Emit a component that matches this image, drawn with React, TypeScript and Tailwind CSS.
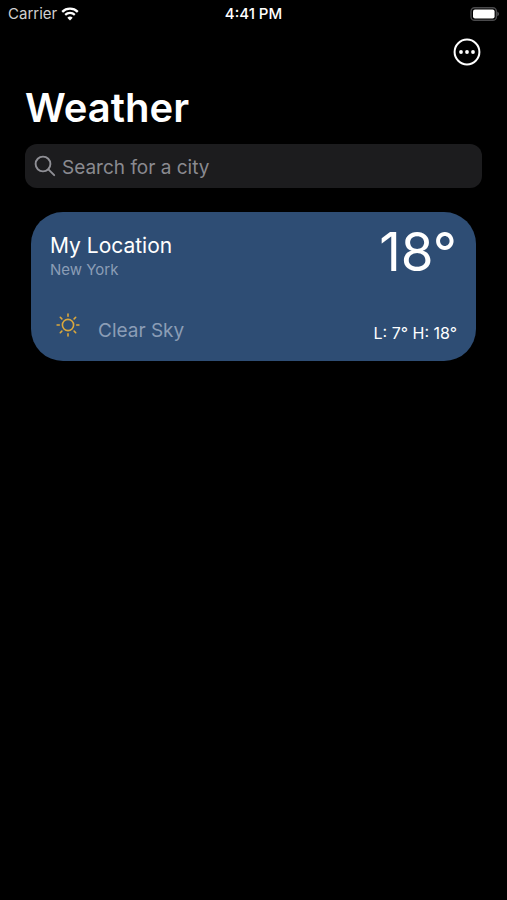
function WifiIcon() {
  return (
    <svg width="18" height="14" viewBox="0 0 18 14" fill="none" aria-hidden="true">
      <path d="M1.2 4.8a11.2 11.2 0 0 1 15.6 0" stroke="white" strokeWidth="2.3" />
      <path d="M4.2 7.9a6.9 6.9 0 0 1 9.6 0" stroke="white" strokeWidth="2.2" />
      <path d="M9 13.4 6.3 10.7a3.9 3.9 0 0 1 5.4 0z" fill="white" />
    </svg>
  );
}

function BatteryIcon() {
  return (
    <svg width="29" height="14" viewBox="0 0 29 14" fill="none" aria-hidden="true">
      <rect x="1" y="0.7" width="25.4" height="12.6" rx="3.6" stroke="#4a4a4c" strokeWidth="1.4" />
      <rect x="3" y="2.4" width="21.6" height="9.2" rx="2" fill="white" />
      <path d="M27.4 4.8c1 .4 1.5 1.2 1.5 2.2s-.5 1.8-1.5 2.2z" fill="#5a5a5c" />
    </svg>
  );
}

function MoreIcon() {
  return (
    <svg width="28" height="28" viewBox="0 0 28 28" fill="none" aria-hidden="true">
      <circle cx="14" cy="14" r="12.4" stroke="white" strokeWidth="2" />
      <circle cx="8" cy="14" r="1.9" fill="white" />
      <circle cx="14" cy="14" r="1.9" fill="white" />
      <circle cx="20" cy="14" r="1.9" fill="white" />
    </svg>
  );
}

function SearchIcon() {
  return (
    <svg width="22" height="22" viewBox="0 0 22 22" fill="none" stroke="#8f8f95" strokeWidth="1.9" strokeLinecap="round" aria-hidden="true">
      <circle cx="9" cy="9" r="7.4" />
      <path d="m14.4 14.4 5.8 5.8" />
    </svg>
  );
}

const rays = [0, 45, 90, 135, 180, 225, 270, 315];

function SunIcon() {
  return (
    <svg width="24" height="24" viewBox="0 0 24 24" fill="none" stroke="#dba83c" strokeWidth="1.6" strokeLinecap="round" aria-hidden="true">
      <circle cx="12" cy="12" r="5.6" />
      {rays.map((angle) => (
        <path key={angle} d="M12 3.3V1.1" transform={`rotate(${angle} 12 12)`} />
      ))}
    </svg>
  );
}

export default function App() {
  return (
    <div className="min-h-screen bg-black font-['Inter',sans-serif] text-white">
      <header className="grid h-7 grid-cols-3 items-center px-2 text-[15px]">
        <div className="flex items-center gap-1 text-[#d0d0d0]">
          <span>Carrier</span>
          <WifiIcon />
        </div>
        <time className="text-center font-medium">4:41 PM</time>
        <div className="flex justify-end">
          <BatteryIcon />
        </div>
      </header>

      <div className="flex h-12 items-center justify-end px-[26px]">
        <button type="button" aria-label="More options">
          <MoreIcon />
        </button>
      </div>

      <main className="px-[25px]">
        <h1 className="pt-1 pb-2 text-[40px] leading-14 font-semibold">Weather</h1>

        <label className="flex h-11 items-center gap-1.5 rounded-xl bg-[#1c1c1e] px-[9px]">
          <SearchIcon />
          <input
            type="search"
            aria-label="Search for a city"
            placeholder="Search for a city"
            className="h-8 min-w-0 flex-1 bg-transparent pt-0.5 text-[19px] outline-none placeholder:text-[#8a8a90]"
          />
        </label>

        <article className="mx-1.5 mt-6 flex h-[149px] flex-col justify-between rounded-[32px] bg-[#2e4d74] px-[19px] pt-4 pb-4">
          <div className="flex items-start justify-between">
            <div className="pt-1">
              <h2 className="text-[21px] leading-7">My Location</h2>
              <p className="text-[15px] leading-5">
                <span className="text-[#8b9db6]">New York</span>
              </p>
            </div>
            <p className="text-[53px] leading-12">18°</p>
          </div>
          <div className="flex items-end justify-between">
            <div className="flex items-end gap-[18px] pl-1.5">
              <div className="pb-2">
                <SunIcon />
              </div>
              <p className="text-[19px] leading-7 text-[#8b9db6]">Clear Sky</p>
            </div>
            <p className="text-base leading-6">L: 7° H: 18°</p>
          </div>
        </article>
      </main>
    </div>
  );
}
